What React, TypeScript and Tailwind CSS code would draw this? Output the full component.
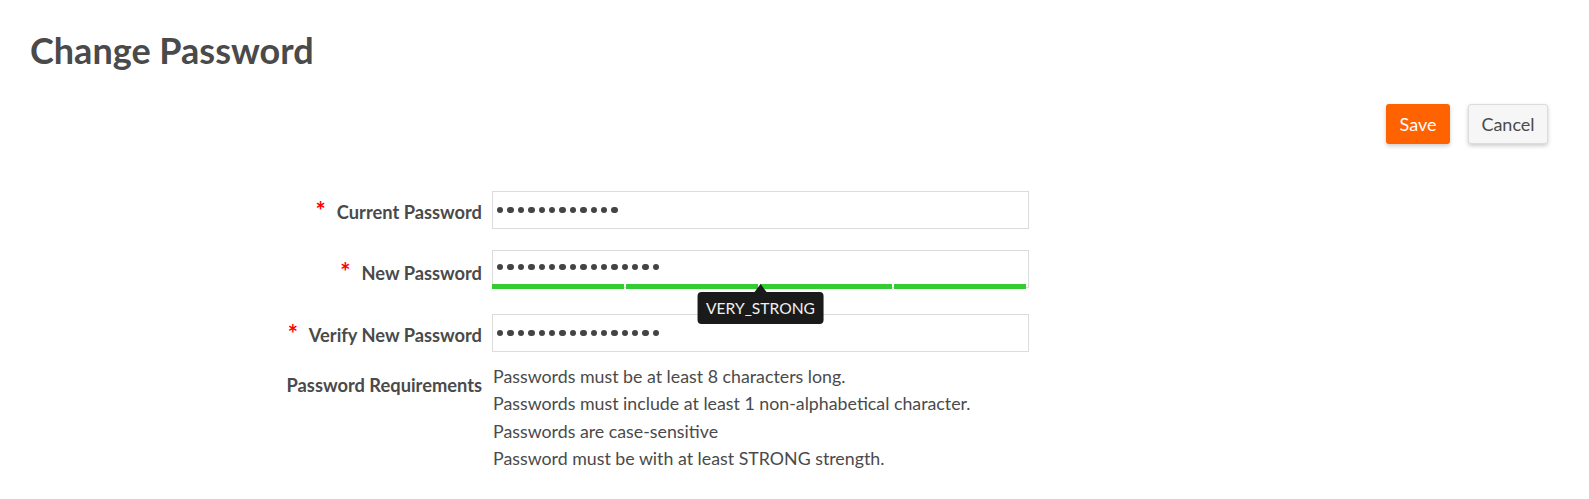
import React from "react";

function Dots({ n }: { n: number }) {
  return (
    <div className="flex items-center gap-[4px] pl-[4px]">
      {Array.from({ length: n }).map((_, i) => (
        <span key={i} className="block w-[6.4px] h-[6.4px] rounded-full bg-[#444444]" />
      ))}
    </div>
  );
}

function Label({ text, pt, required = true }: { text: string; pt: string; required?: boolean }) {
  return (
    <div className={`text-right font-bold text-[18.3px] leading-[26.8px] whitespace-nowrap ${pt}`}>
      {required && <span className="text-[#ff0000] text-[24px] leading-none mr-[11px] relative top-[1px]">*</span>}
      {text}
    </div>
  );
}

export default function App() {
  return (
    <div className="w-[1589px] h-[499px] bg-white font-['Lato',sans-serif] text-[#4a4a4a] overflow-hidden">
      <h1 className="pl-[30px] pt-[30px] text-[36px] leading-[40px] font-bold">Change Password</h1>

      <div className="flex justify-end gap-[18px] pr-[41px] mt-[34px]">
        <button className="w-[64px] h-[40px] rounded-[3px] bg-[#ff6200] text-white text-[18px] shadow-[0_2px_4px_rgba(0,0,0,0.2)]">
          Save
        </button>
        <button className="w-[80px] h-[40px] rounded-[3px] bg-[#f6f6f6] border border-[#dcdcdc] text-[#4a4a4a] text-[18px] shadow-[0_2px_4px_rgba(0,0,0,0.2)]">
          Cancel
        </button>
      </div>

      <div className="mt-[47px] grid grid-cols-[482px_537px] gap-x-[10px]">
        <Label text="Current Password" pt="pt-[7px]" />
        <div className="h-[38px] border border-[#dcdcdc] flex items-center">
          <Dots n={12} />
        </div>

        <div className="mt-[21px]">
          <Label text="New Password" pt="pt-[9px]" />
        </div>
        <div className="mt-[21px] relative h-[38px] border border-[#dcdcdc] flex items-center pb-[4px]">
          <Dots n={16} />
          <div className="absolute left-[-1px] right-[2px] top-[33px] h-[5px] flex gap-[2px]">
            <div className="flex-1 bg-[#33cc33]" />
            <div className="flex-1 bg-[#33cc33]" />
            <div className="flex-1 bg-[#33cc33]" />
            <div className="flex-1 bg-[#33cc33]" />
          </div>
          <div className="absolute top-[41px] left-1/2 -translate-x-1/2 z-10">
            <div className="absolute left-1/2 -translate-x-1/2 top-[-8px] w-0 h-0 border-l-[6px] border-r-[6px] border-b-[8px] border-l-transparent border-r-transparent border-b-[#1a1a1a]" />
            <div className="bg-[#1a1a1a] text-[#f0f0f0] text-[15.6px] leading-[32px] px-[9px] rounded-[4px] whitespace-nowrap">
              VERY_STRONG
            </div>
          </div>
        </div>

        <div className="mt-[26px]">
          <Label text="Verify New Password" pt="pt-[7px]" />
        </div>
        <div className="mt-[26px] h-[38px] border border-[#dcdcdc] flex items-center">
          <Dots n={16} />
        </div>

        <div className="mt-[11px] pt-[9px]">
          <Label text="Password Requirements" pt="" required={false} />
        </div>
        <div className="mt-[11px] text-[17.8px] leading-[27.3px] pl-[1px]">
          <div>Passwords must be at least 8 characters long.</div>
          <div>Passwords must include at least 1 non-alphabetical character.</div>
          <div>Passwords are case-sensitive</div>
          <div>Password must be with at least STRONG strength.</div>
        </div>
      </div>
    </div>
  );
}
